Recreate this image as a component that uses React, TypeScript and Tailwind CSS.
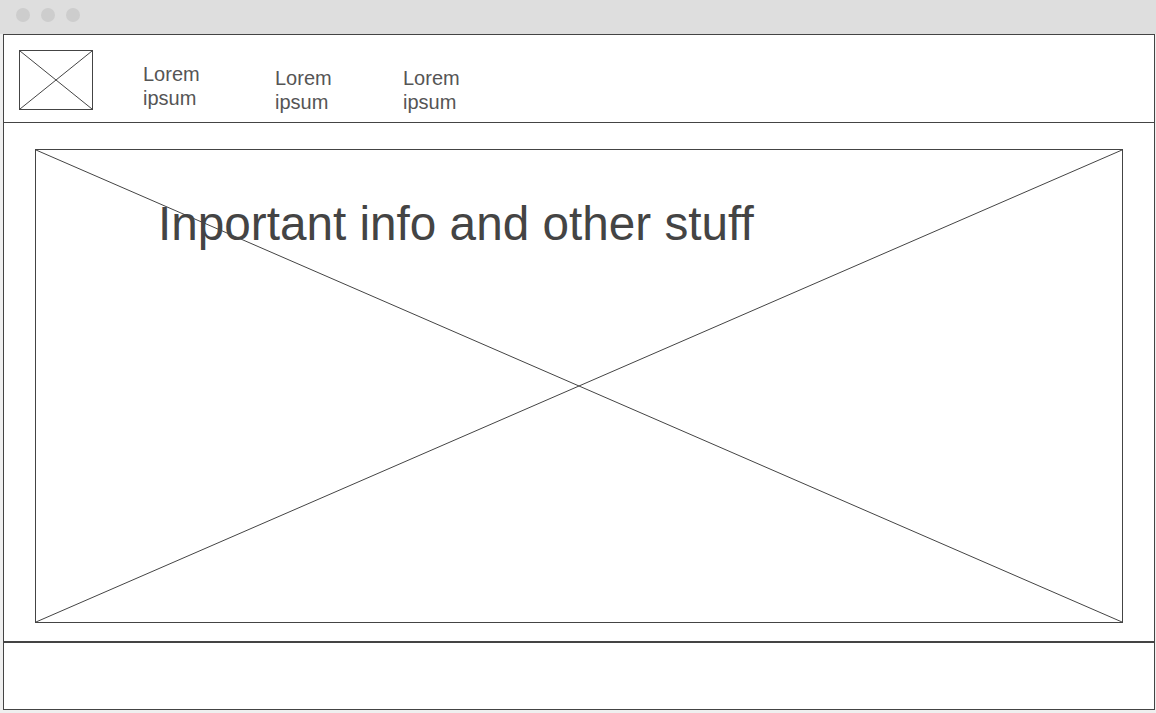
import React from 'react';

const navItems = [
    { label: 'Lorem ipsum', width: 'w-[132px]', top: 'mt-[27px]' },
    { label: 'Lorem ipsum', width: 'w-[128px]', top: 'mt-[31px]' },
    { label: 'Lorem ipsum', width: 'w-[128px]', top: 'mt-[31px]' },
];

function Placeholder({ className, children }: { className?: string; children?: React.ReactNode }) {
    return (
        <div className={`relative border border-[#444] ${className ?? ''}`}>
            <svg className="absolute inset-0 w-full h-full" preserveAspectRatio="none" viewBox="0 0 100 100">
                <line x1="0" y1="0" x2="100" y2="100" stroke="#444" strokeWidth="1" vectorEffect="non-scaling-stroke" />
                <line x1="100" y1="0" x2="0" y2="100" stroke="#444" strokeWidth="1" vectorEffect="non-scaling-stroke" />
            </svg>
            {children}
        </div>
    );
}

export default function App() {
    return (
        <div className="w-[1156px] h-[713px] bg-[#efefef] font-['Liberation_Sans',Arial,sans-serif] text-[#444] overflow-hidden">
            {/* Title bar */}
            <div className="h-[34px] bg-[#dedede] flex items-start gap-[11px] pl-[16px] pt-[8px]">
                <span className="w-[14px] h-[14px] rounded-full bg-[#cdcdcd]" />
                <span className="w-[14px] h-[14px] rounded-full bg-[#cdcdcd]" />
                <span className="w-[14px] h-[14px] rounded-full bg-[#cdcdcd]" />
            </div>

            {/* Window */}
            <div className="ml-[3px] w-[1152px] h-[676px] border border-[#444] bg-white flex flex-col">
                {/* Header */}
                <header className="h-[88px] shrink-0 border-b border-[#444] flex items-start pl-[15px]">
                    <Placeholder className="w-[74px] h-[60px] mt-[15px] shrink-0" />
                    <nav className="flex ml-[50px]">
                        {navItems.map((item, i) => (
                            <div key={i} className={`${item.width} ${item.top} text-[20px] leading-[24px] text-[#555]`}>
                                Lorem<br />ipsum
                            </div>
                        ))}
                    </nav>
                </header>

                {/* Main */}
                <main className="h-[520px] shrink-0 pt-[26px] pb-[18px] px-[31px] border-b-2 border-[#444]">
                    <Placeholder className="h-full w-full">
                        <h1 className="relative pt-[50px] pl-[122px] text-[47.7px] leading-none font-normal">
                            Inportant info and other stuff
                        </h1>
                    </Placeholder>
                </main>

                {/* Footer */}
                <footer className="flex-1" />
            </div>
        </div>
    );
}
